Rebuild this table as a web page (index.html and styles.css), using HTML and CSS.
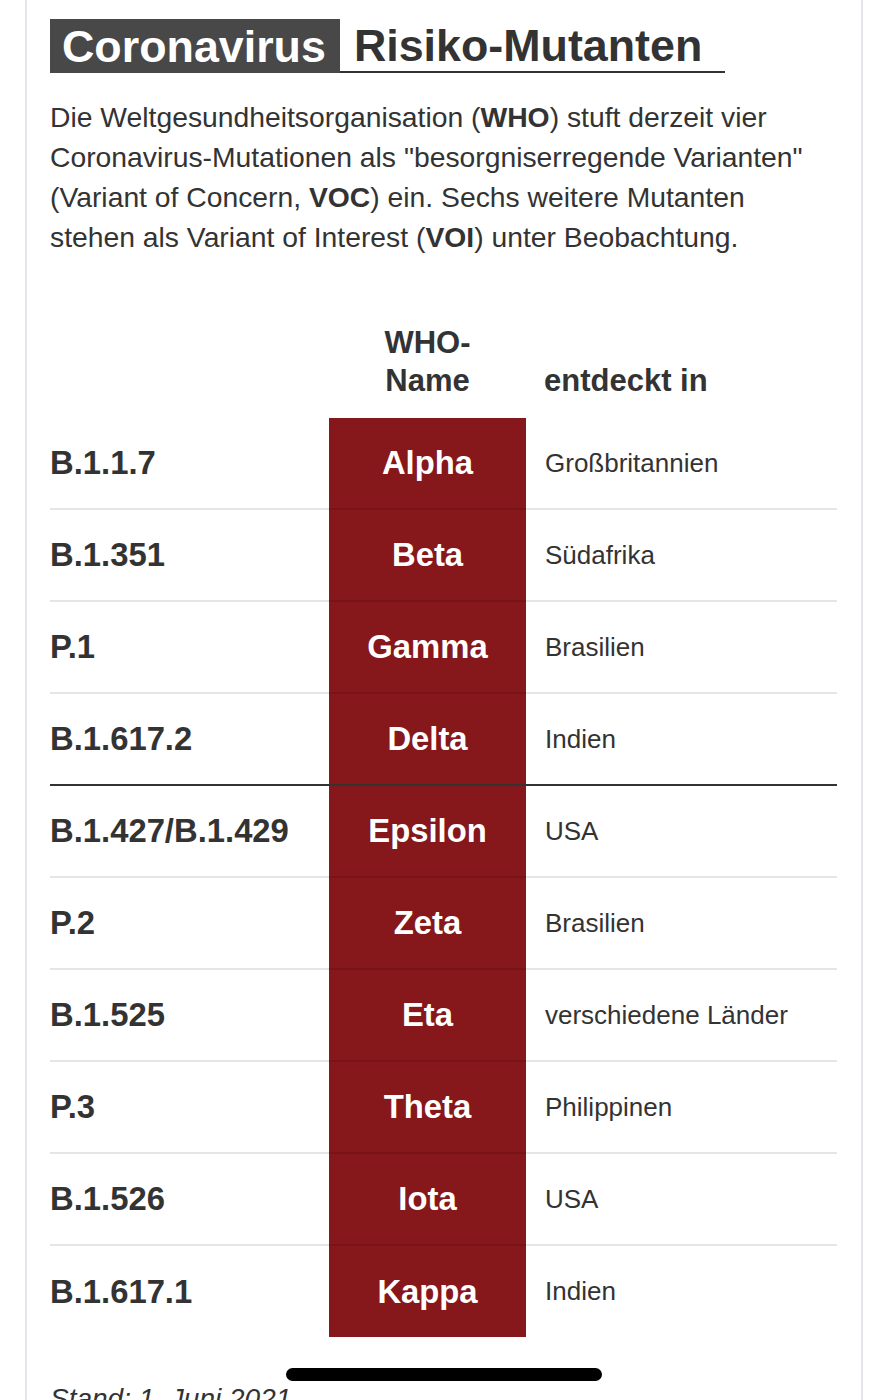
FILE: index.html
```html
<!DOCTYPE html>
<html lang="de">
<head>
<meta charset="utf-8">
<title>Coronavirus Risiko-Mutanten</title>
<link rel="stylesheet" href="styles.css">
</head>
<body>
<div class="card">
  <h1 class="title"><span class="title-box">Coronavirus</span><span class="title-rest">Risiko-Mutanten</span></h1>
  <p class="intro">Die Weltgesundheitsorganisation (<b>WHO</b>) stuft derzeit vier Coronavirus-Mutationen als "besorgniserregende Varianten" (Variant of Concern, <b>VOC</b>) ein. Sechs weitere Mutanten stehen als Variant of Interest (<b>VOI</b>) unter Beobachtung.</p>
  <div class="table">
    <div class="head">
      <div class="h h1"></div>
      <div class="h h2">WHO-<br>Name</div>
      <div class="h h3">entdeckt in</div>
    </div>
    <div class="row"><div class="c code">B.1.1.7</div><div class="c who">Alpha</div><div class="c land">Großbritannien</div></div>
    <div class="row"><div class="c code">B.1.351</div><div class="c who">Beta</div><div class="c land">Südafrika</div></div>
    <div class="row"><div class="c code">P.1</div><div class="c who">Gamma</div><div class="c land">Brasilien</div></div>
    <div class="row sep"><div class="c code">B.1.617.2</div><div class="c who">Delta</div><div class="c land">Indien</div></div>
    <div class="row"><div class="c code">B.1.427/B.1.429</div><div class="c who">Epsilon</div><div class="c land">USA</div></div>
    <div class="row"><div class="c code">P.2</div><div class="c who">Zeta</div><div class="c land">Brasilien</div></div>
    <div class="row"><div class="c code">B.1.525</div><div class="c who">Eta</div><div class="c land">verschiedene Länder</div></div>
    <div class="row"><div class="c code">P.3</div><div class="c who">Theta</div><div class="c land">Philippinen</div></div>
    <div class="row"><div class="c code">B.1.526</div><div class="c who">Iota</div><div class="c land">USA</div></div>
    <div class="row last"><div class="c code">B.1.617.1</div><div class="c who">Kappa</div><div class="c land">Indien</div></div>
  </div>
  <p class="stand">Stand: 1. Juni 2021</p>
</div>
<div class="home-indicator"></div>
</body>
</html>
```
FILE: styles.css
```css
html, body {
  margin: 0;
  padding: 0;
  background: #fff;
}
body {
  font-family: "Liberation Sans", Arial, Helvetica, sans-serif;
  color: #333;
  height: 1400px;
  overflow: hidden;
  position: relative;
}
.card {
  margin-left: 25px;
  width: 838px;
  border-left: 2px solid #e4e6ec;
  border-right: 2px solid #e4e6ec;
  padding: 19px 24px 40px 23px;
  min-height: 1400px;
  box-sizing: border-box;
}
.title {
  margin: 0;
  font-size: 44.8px;
  font-weight: bold;
  line-height: 54px;
  display: flex;
  width: 675px;
}
.title-box {
  background: #484848;
  color: #fff;
  padding: 0 14px 0 12px;
}
.title-rest {
  flex: 1;
  color: #333;
  padding-left: 14px;
  border-bottom: 2px solid #333;
  line-height: 52px;
}
.intro {
  margin: 24px 0 0;
  width: 775px;
  font-size: 28.3px;
  line-height: 40px;
  color: #333;
}
.intro b {
  font-weight: bold;
}
.table {
  margin-top: 67px;
  width: 787px;
}
.head, .row {
  display: grid;
  grid-template-columns: 279px 197px 311px;
}
.h {
  font-size: 31px;
  font-weight: bold;
  line-height: 38px;
  padding-bottom: 18px;
  align-self: end;
}
.h2 {
  text-align: center;
}
.h3 {
  padding-left: 18px;
}
.row {
  height: 92px;
  box-sizing: border-box;
}
.c {
  display: flex;
  align-items: center;
  border-bottom: 2px solid rgba(0, 0, 0, 0.1);
}
.row.sep .c {
  border-bottom-color: #333;
}
.row.last .c {
  border-bottom: none;
}
.row.last {
  height: 91px;
}
.code {
  font-size: 32.8px;
  font-weight: bold;
  color: #333;
}
.who {
  background: #86171b;
  color: #fff;
  font-size: 32.8px;
  font-weight: bold;
  justify-content: center;
}
.land {
  font-size: 26px;
  color: #333;
  padding-left: 19px;
}
.stand {
  margin: 42px 0 0;
  font-size: 28px;
  font-style: italic;
  line-height: 40px;
  color: #333;
}
.home-indicator {
  position: absolute;
  left: 286px;
  top: 1368px;
  width: 316px;
  height: 13px;
  border-radius: 7px;
  background: #000;
}
```
